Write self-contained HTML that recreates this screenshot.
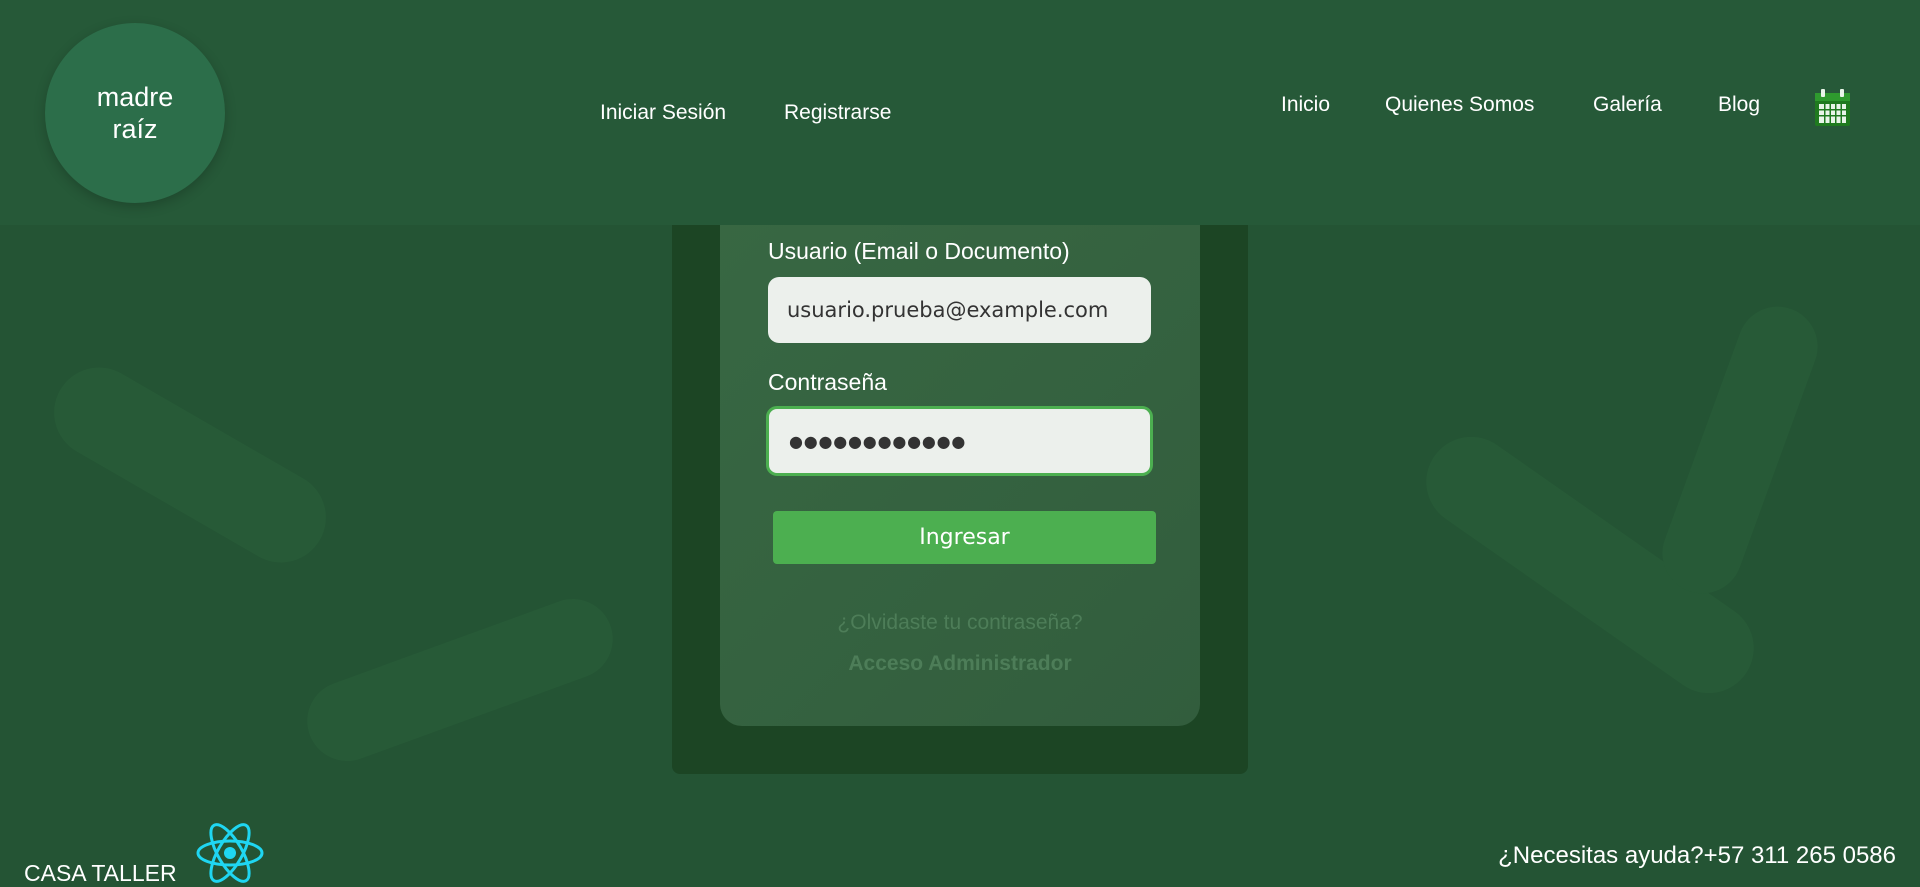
<!DOCTYPE html>
<html><head><meta charset="utf-8"><style>
*{margin:0;padding:0;box-sizing:border-box}
body{width:1920px;height:880px;overflow:hidden;background:#245434;font-family:"Liberation Sans",sans-serif;position:relative}
.bgs{position:absolute;inset:0;overflow:hidden}
.s{position:absolute;background:#275a37;border-radius:200px}
header{position:absolute;left:0;top:0;width:1920px;height:225px;background:#265938;z-index:5}
.logo{position:absolute;left:45px;top:23px;width:180px;height:180px;border-radius:50%;background:#2c6e4a;color:#fff;font-size:27px;text-align:center;line-height:32px;padding-top:58px;box-shadow:0 4px 12px rgba(0,0,0,.2)}
.nav{position:absolute;color:#fff;font-size:21px;white-space:nowrap}
.outer{position:absolute;left:672px;top:150px;width:576px;height:624px;background:#1c4524;border-radius:8px}
.card{position:absolute;left:720px;top:150px;width:480px;height:576px;background:linear-gradient(135deg,#386843,#325d3d);border-radius:22px}
.lbl{position:absolute;left:768px;color:#fff;font-size:23px}
.inp{position:absolute;background:#ecf0ec;border-radius:11px;color:#333;font-family:"DejaVu Sans",sans-serif;font-size:21px;padding-left:19px;display:flex;align-items:center}
.btn{position:absolute;left:773px;top:511px;width:383px;height:53px;background:#4caf50;border-radius:4px;color:#fff;font-family:"DejaVu Sans",sans-serif;font-size:22px;text-align:center;line-height:53px}
.lk{position:absolute;left:720px;width:480px;text-align:center;color:#4d7d58;font-size:21px}
</style></head><body>
<div class="bgs">
<div class="s" style="left:40px;top:420px;width:300px;height:90px;transform:rotate(30deg)"></div>
<div class="s" style="left:1400px;top:520px;width:380px;height:90px;transform:rotate(35deg)"></div>
<div class="s" style="left:300px;top:640px;width:320px;height:80px;transform:rotate(-20deg)"></div>
<div class="s" style="left:1700px;top:300px;width:80px;height:300px;transform:rotate(20deg)"></div>
</div>
<div class="outer"></div>
<div class="card"></div>
<div class="lbl" style="top:238px">Usuario (Email o Documento)</div>
<div class="inp" style="left:768px;top:277px;width:383px;height:66px">usuario.prueba@example.com</div>
<div class="lbl" style="top:369px">Contraseña</div>
<div class="inp" style="left:766px;top:406px;width:387px;height:70px;border:3px solid #4caf50;font-size:16px;letter-spacing:0.8px;padding-left:20px">●●●●●●●●●●●●</div>
<div class="btn">Ingresar</div>
<div class="lk" style="top:611px">¿Olvidaste tu contraseña?</div>
<div class="lk" style="top:652px;font-weight:bold">Acceso Administrador</div>
<header>
<div class="logo">madre<br>raíz</div>
<div class="nav" style="left:600px;top:101px">Iniciar Sesión</div>
<div class="nav" style="left:784px;top:101px">Registrarse</div>
<div class="nav" style="left:1281px;top:93px">Inicio</div>
<div class="nav" style="left:1385px;top:93px">Quienes Somos</div>
<div class="nav" style="left:1593px;top:93px">Galería</div>
<div class="nav" style="left:1718px;top:93px">Blog</div>
<svg style="position:absolute;left:1814px;top:89px" width="37" height="38" viewBox="0 0 37 38">
<rect x="1" y="4" width="35" height="33" rx="2" fill="#1f7a1f"/>
<rect x="1" y="4" width="35" height="8" fill="#2e9a2e"/>
<rect x="7" y="0" width="4" height="8" rx="1" fill="#e8f5e8"/><rect x="26" y="0" width="4" height="8" rx="1" fill="#e8f5e8"/>
<g fill="#e8f5e8"><rect x="5" y="15" width="27" height="19"/></g>
<g fill="#1f7a1f"><rect x="10" y="15" width="1.5" height="19"/><rect x="15.5" y="15" width="1.5" height="19"/><rect x="21" y="15" width="1.5" height="19"/><rect x="26.5" y="15" width="1.5" height="19"/><rect x="5" y="20" width="27" height="1.5"/><rect x="5" y="26" width="27" height="1.5"/></g>
</svg>
</header>
<div style="position:absolute;left:24px;top:860px;color:#fff;font-size:23px">CASA TALLER</div>
<svg style="position:absolute;left:196px;top:822px" width="68" height="62" viewBox="-34 -31 68 62">
<g fill="none" stroke="#1fd6f2" stroke-width="3"><ellipse rx="32" ry="12"/><ellipse rx="32" ry="12" transform="rotate(60)"/><ellipse rx="32" ry="12" transform="rotate(120)"/></g>
<circle r="6" fill="#1fd6f2"/></svg>
<div style="position:absolute;right:24px;top:842px;color:#fff;font-size:24px">¿Necesitas ayuda?+57 311 265 0586</div>
</body></html>
